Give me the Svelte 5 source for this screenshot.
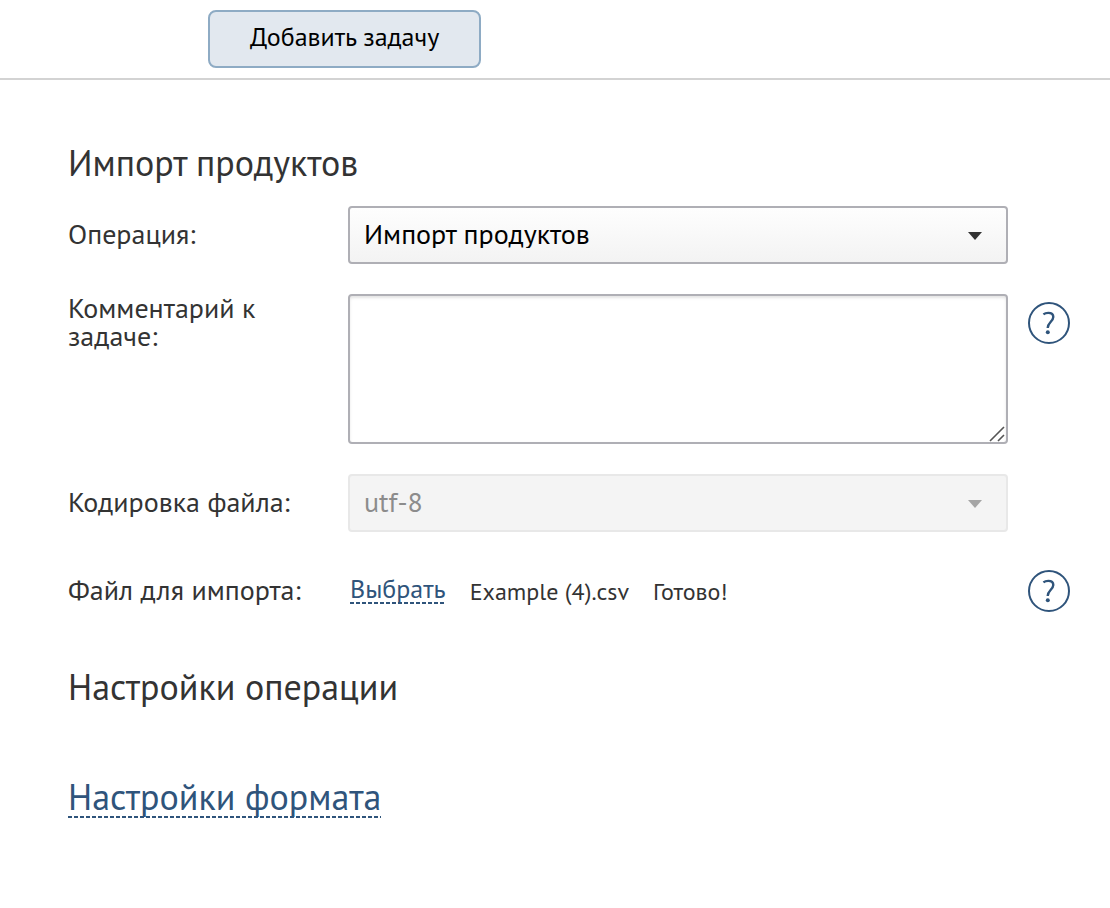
<script>
  let operation = $state('products');
  let comment = $state('');
  const fileName = 'Example (4).csv';
</script>

{#snippet help()}
  <button class="help" type="button" aria-label="?">
    <svg viewBox="0 0 42 42" aria-hidden="true">
      <circle cx="21" cy="21" r="20" />
      <path d="M15.4 12.4C16.8 11.3 18.4 10.9 20.3 10.9C23.4 10.9 25.3 12.5 25.3 15C25.3 17.2 24 18.6 22.4 20.3C20.6 22.2 19.7 23.4 19.7 26" />
      <circle class="dot" cx="19.8" cy="30.2" r="2" />
    </svg>
  </button>
{/snippet}

<div class="page">
  <header>
    <button class="add" type="submit" form="task">Добавить задачу</button>
  </header>

  <main>
    <form id="task" onsubmit={(e) => e.preventDefault()}>
      <h2>Импорт продуктов</h2>

      <div class="row">
        <label for="operation">Операция:</label>
        <div class="control">
          <select id="operation" bind:value={operation}>
            <option value="products">Импорт продуктов</option>
          </select>
          <svg class="arrow" viewBox="0 0 14 8" aria-hidden="true"><path d="M0 0H14L7 8Z" /></svg>
        </div>
      </div>

      <div class="row">
        <label for="comment">Комментарий к задаче:</label>
        <div class="control">
          <textarea id="comment" bind:value={comment}></textarea>
          <svg class="grip" viewBox="0 0 16 16" aria-hidden="true"><path d="M1 15L15 1M9 15L15 9" /></svg>
        </div>
        {@render help()}
      </div>

      <div class="row">
        <label for="encoding">Кодировка файла:</label>
        <div class="control">
          <select id="encoding" disabled>
            <option>utf-8</option>
          </select>
          <svg class="arrow muted" viewBox="0 0 14 8" aria-hidden="true"><path d="M0 0H14L7 8Z" /></svg>
        </div>
      </div>

      <div class="row">
        <label for="choose">Файл для импорта:</label>
        <div class="file">
          <button id="choose" class="choose" type="button">Выбрать</button>
          <span>{fileName}</span>
          <span>Готово!</span>
        </div>
        {@render help()}
      </div>

      <h2 class="section">Настройки операции</h2>
      <h2 class="section"><a href="#format">Настройки формата</a></h2>
    </form>
  </main>
</div>

<style>
  :global(body) {
    background: #fff;
  }
  .page {
    font-family: 'PT Sans', 'Noto Sans', sans-serif;
    font-size: 28px;
    line-height: 28px;
    color: #333;
  }
  header {
    padding: 10px 40px 10px 208px;
    border-bottom: 2px solid #d3d3d3;
  }
  button,
  select,
  textarea {
    font: inherit;
    box-sizing: border-box;
    margin: 0;
  }
  .add {
    display: block;
    height: 58px;
    padding: 0 40px 4px;
    border: 2px solid #8eabc4;
    border-radius: 8px;
    background: #e2e8ef;
    color: #000;
    font-size: 26px;
  }
  main {
    padding: 63px 40px 64px 68px;
  }
  h2 {
    margin: 0 0 23px;
    font-size: 36px;
    line-height: 40px;
    font-weight: 400;
  }
  .row {
    display: grid;
    grid-template-columns: 260px 1fr 42px;
    column-gap: 20px;
    align-items: start;
    margin-bottom: 30px;
  }
  label {
    padding-top: 14px;
  }
  .row:has(textarea) label {
    padding-top: 0;
    padding-right: 40px;
  }
  .control {
    position: relative;
  }
  select,
  textarea {
    display: block;
    width: 100%;
    border: 2px solid #afafb5;
    border-radius: 4px;
    color: #000;
  }
  select {
    appearance: none;
    height: 58px;
    padding: 0 50px 2px 14px;
    background: linear-gradient(#fefefe, #f3f3f3);
  }
  select:disabled {
    border-color: #e8e8e8;
    background: #f4f4f4;
    color: #8c8c8c;
    opacity: 1;
  }
  textarea {
    height: 150px;
    padding: 12px 14px;
    background: #fff;
    box-shadow: inset 0 2px 3px #e4e4e4;
    resize: none;
  }
  .arrow {
    position: absolute;
    top: 26px;
    right: 26px;
    width: 14px;
    height: 8px;
    fill: #333;
    pointer-events: none;
  }
  .arrow.muted {
    fill: #a5a5a5;
  }
  .grip {
    position: absolute;
    right: 3px;
    bottom: 2px;
    width: 16px;
    height: 16px;
    fill: none;
    stroke: #555;
    stroke-width: 1.6;
    pointer-events: none;
  }
  .help {
    width: 42px;
    height: 42px;
    margin-top: 8px;
    padding: 0;
    border: 0;
    background: none;
  }
  .help svg {
    display: block;
    fill: none;
    stroke: #2f547b;
    stroke-width: 2;
  }
  .help path {
    stroke-width: 2.4;
  }
  .help .dot {
    fill: #2f547b;
    stroke: none;
  }
  .file {
    display: flex;
    box-sizing: border-box;
    align-items: center;
    gap: 24px;
    min-height: 58px;
    padding: 2px 0 0 2px;
    font-size: 24px;
  }
  .choose,
  a {
    color: #2f547b;
    background: repeating-linear-gradient(90deg, #2f547b 0 4px, transparent 4px 6px) left bottom / 100% 2px no-repeat;
  }
  .choose {
    margin-bottom: 4px;
    padding: 0 0 2px;
    border: 0;
    font-size: 26px;
    line-height: 26px;
  }
  .section {
    margin: 48px 0 70px;
  }
  .section + .section {
    margin: 0;
  }
  a {
    display: inline-block;
    padding-bottom: 2px;
    line-height: 38px;
    text-decoration: none;
  }
  h2.section {
    margin-top: 47px;
  }
</style>
